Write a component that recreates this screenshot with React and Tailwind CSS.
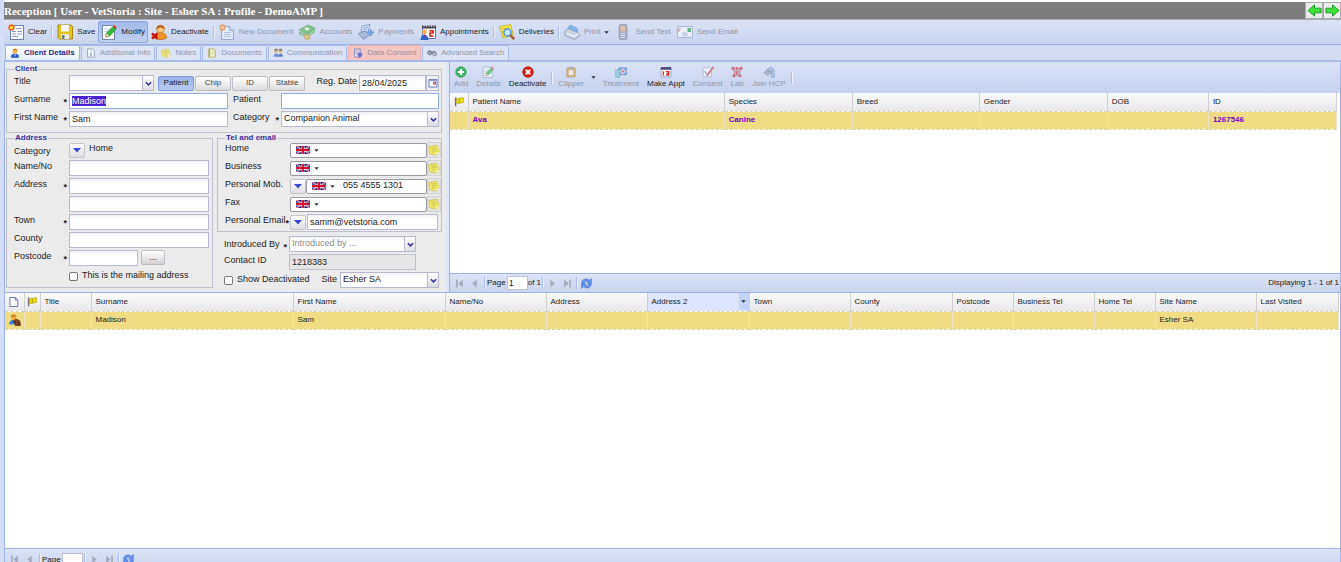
import React, { useEffect, useRef } from "react";

const icons = {
  clear: (
    <>
      <rect x="2.5" y="1.5" width="13" height="14" fill="#fdfdff" stroke="#6d84b4" />
      <path d="M8 4.500h6M4 7.500h4M9.500 7.500h4.500M4 10h4M9.500 10h4.500M4 12.500h6" stroke="#8f9bc0" />
      <circle cx="3.500" cy="3.500" r="3.200" fill="#ef6a1c" />
      <circle cx="3.500" cy="3.500" r="1.500" fill="#ffe04a" />
    </>
  ),
  save: (
    <>
      <path d="M1 1h13l1.500 1.500V15H2.500L1 13.500z" fill="#e3c51d" stroke="#a58a0e" />
      <path d="M4 1h8v6.500H4z" fill="#f4f6fb" />
      <path d="M4 10h8v5H4z" fill="#e9edf6" />
      <path d="M5 11h2.500v4H5z" fill="#6f7686" />
    </>
  ),
  modify: (
    <>
      <path d="M1.500 1.500h12v14h-12z" fill="#fff" stroke="#7687a8" />
      <path d="M3.500 7.500h4M3.500 10h3M3.500 5h5" stroke="#b9c4d8" />
      <path d="M4.500 13l1.200-4L12 2.500 15 5l-6.500 7z" fill="#35b93c" stroke="#1c7a2b" strokeWidth=".7" />
      <path d="M11.800 2.700L13.300 1l2.400 2.200L14.600 5z" fill="#e2363c" />
      <path d="M4.500 13l1.200-3.500 2.500 2.300z" fill="#f3cf9a" />
    </>
  ),
  userDelete: (
    <>
      <path d="M3 14c0-4 2.500-5.500 6-5.500s6.500 1.500 6.500 5.500c-3 2-9 2-12.500 0z" fill="#f0982a" stroke="#b9601a" strokeWidth=".7" />
      <circle cx="9.500" cy="5" r="3.800" fill="#f8ca84" stroke="#b36d1c" strokeWidth=".6" />
      <path d="M5.400 5.200C5 0 14 0 13.700 5.200 11.500 4.500 10.500 3.500 9.500 3.500S6.800 4.500 5.400 5.200z" fill="#b8621a" />
      <path d="M1 9.500l5.500 5M6.500 9.500l-5.500 5" stroke="#c9140c" strokeWidth="2.400" />
    </>
  ),
  newDoc: (
    <>
      <path d="M2.500 2.500h8l4 4v9h-12z" fill="#eef4ff" stroke="#6f8fc6" />
      <path d="M10.500 2.500v4h4" fill="#c9dbf8" stroke="#6f8fc6" />
      <path d="M5 8.500h7M5 10.500h7M5 12.500h7" stroke="#9fb6de" />
      <circle cx="3.500" cy="3.500" r="3.200" fill="#f08035" />
      <circle cx="3.500" cy="3.500" r="1.300" fill="#ffe56b" />
    </>
  ),
  accounts: (
    <>
      <path d="M0 6l9-5 7 3-8 6z" fill="#45b445" stroke="#2e8636" strokeWidth=".7" />
      <path d="M0 8l8 2.500L16 5v3l-8 5-8-3z" fill="#7fd56c" stroke="#2e8636" strokeWidth=".7" />
      <ellipse cx="8" cy="5" rx="2.500" ry="1.400" fill="#e5f6d8" />
      <path d="M5 11h5l1 4H6z" fill="#efc03c" stroke="#b48316" strokeWidth=".7" />
    </>
  ),
  payments: (
    <>
      <path d="M4 2l8-1.500-2 8-7-1z" fill="#e3ecfa" stroke="#466aa2" strokeWidth=".9" />
      <path d="M5.500 4l4.500-1M5 6l4.500-1" stroke="#5f81b5" />
      <path d="M.5 9.500l7-2.500 5 3.500-7 5z" fill="#8499c0" stroke="#3c5a94" strokeWidth=".7" />
      <path d="M3 10l3 2.500M5.500 9l3 2.500" stroke="#dde5f4" strokeWidth=".8" />
      <path d="M9.500 8.500h6.500M12.700 5.500v6.500" stroke="#2f74e0" strokeWidth="2.200" />
    </>
  ),
  calendar: (
    <>
      <path d="M2.500 3.500h13v11h-13z" fill="#fff" stroke="#6b6fd5" />
      <path d="M2 1.500h14v3H2z" fill="#44454f" />
      <path d="M4 0v3M6.500 0v3M9 0v3M11.500 0v3M14 0v3" stroke="#e0e2ee" strokeWidth=".8" />
      <path d="M9.500 6.800h3.500v2.200h-3v3h3.500" fill="none" stroke="#e02b20" strokeWidth="1.700" />
      <circle cx="4.500" cy="8" r="2.400" fill="#f0b54a" />
      <path d="M.5 16c0-7 8-7 8 0z" fill="#2d65cc" />
      <path d="M4 10.500l.500 3 .500-3z" fill="#e02b20" />
    </>
  ),
  deliveries: (
    <>
      <path d="M.7 2.500l11-2 2.500 10L4 14z" fill="#f6e94c" stroke="#bba81b" strokeWidth=".8" />
      <path d="M3 5l7-1.500M3.500 7.500l3-.500" stroke="#c8b52a" strokeWidth=".8" />
      <circle cx="8.500" cy="8.500" r="3.600" fill="#c7e6fc" stroke="#4f95d8" strokeWidth="1.500" />
      <path d="M11.200 11.200l4 4" stroke="#a85a20" strokeWidth="2.400" />
    </>
  ),
  print: (
    <>
      <path d="M3 6l3-5 7 3 1 5z" fill="#3f9cec" stroke="#3b7dbb" strokeWidth=".7" />
      <path d="M.5 8l3-3.500 10.500 4 2 3-5.500 4L1 11.500z" fill="#c7cedb" stroke="#6b7484" strokeWidth=".8" />
      <path d="M2 9.500l8.500 3 4-3" fill="none" stroke="#fff" strokeWidth="1.300" />
    </>
  ),
  phone: (
    <>
      <path d="M5 .500h6l1 1v13l-1 1H5l-1-1v-13z" fill="#858ca2" stroke="#636b80" strokeWidth=".7" />
      <path d="M5.500 2h5v5.500h-5z" fill="#f5a66c" />
      <path d="M5.500 9.500h5M5.500 11.500h5M5.500 13.500h5" stroke="#dfe3ec" />
    </>
  ),
  email: (
    <>
      <path d="M.5 2.500h15v11H.5z" fill="#f8f9fe" stroke="#8695c4" strokeWidth=".9" />
      <path d="M10.500 4h3.500v4h-3.500z" fill="#12a43a" />
      <path d="M5 9h5M5 11h6" stroke="#97a3c8" />
      <path d="M.5 5h3.500M.5 7h2.500" stroke="#e25c6c" />
    </>
  ),
  user: (
    <>
      <path d="M2 14.500c0-7 12-7 12 0-3 1.500-9 1.500-12 0z" fill="#3667cf" stroke="#234793" />
      <circle cx="8" cy="5" r="3.800" fill="#f2b04e" />
      <path d="M4 4c0-4 8-4 8 0-3-1-5-1-8 0z" fill="#c07a25" />
      <path d="M7 9h2l-1 5z" fill="#fff" />
    </>
  ),
  info: (
    <>
      <path d="M2.500 1.500h8l3 3v10h-11z" fill="#fff" stroke="#7c8cab" strokeWidth="1.500" />
      <path d="M8 5v1.500M8 8v4.500" stroke="#536a9c" strokeWidth="2" />
    </>
  ),
  note: (
    <>
      <path d="M1 3.500l11-2 3 9-4 4.500-9-2z" fill="#f1e944" stroke="#c9be35" />
      <path d="M4 5.500l6-1M4.500 8l7-1M5 11l5-1" stroke="#bdb232" />
      <path d="M15 10.500l-4 .500v4z" fill="#fbf8b5" />
    </>
  ),
  docs: (
    <>
      <path d="M2.500 1.500h8l3 3v10h-11z" fill="#fbf9b0" stroke="#a8a647" strokeWidth="1.500" />
      <path d="M4 2v12" stroke="#72a34b" strokeWidth="2" />
      <path d="M7 6h5M7 9h5" stroke="#bcb974" />
    </>
  ),
  users: (
    <>
      <circle cx="5" cy="5" r="3" fill="#e6a94c" />
      <circle cx="12" cy="5" r="2.800" fill="#e6a94c" />
      <path d="M1 14c0-7 8-7 8 0z" fill="#3c70d8" />
      <path d="M8 14c0-7 8-7 8 0z" fill="#3c5fa8" />
      <path d="M2 4c0-4 6-4 6 0zM9 4c0-4 6-4 6 0z" fill="#5a3a13" />
    </>
  ),
  consent: (
    <>
      <path d="M2.500 1.500h9v13h-9z" fill="#dfe6fb" stroke="#6276ba" strokeWidth="1.500" />
      <path d="M4 5h6M4 8h4" stroke="#6276ba" />
      <path d="M7 8.500l4-1.500 4 1.500c0 4-1.500 6-4 7-2.500-1-4-3-4-7z" fill="#3d52c8" />
    </>
  ),
  binoculars: (
    <>
      <path d="M0 6l4-3 5 2 3-1 4 5-2 4-4-1-1-3-3 2-4-1z" fill="#6b7387" />
      <circle cx="4" cy="8" r="2.800" fill="#8d96ab" stroke="#353c50" />
      <circle cx="12" cy="10" r="2.800" fill="#c5cddd" stroke="#353c50" />
    </>
  ),
  add: (
    <>
      <circle cx="8" cy="8" r="7" fill="#3fbb66" stroke="#2f9a50" />
      <path d="M8 4v8M4 8h8" stroke="#fff" strokeWidth="2.600" />
    </>
  ),
  remove: (
    <>
      <circle cx="8" cy="8" r="7" fill="#e01a10" stroke="#a60f08" />
      <path d="M5 5l6 6M11 5l-6 6" stroke="#fff" strokeWidth="2.600" />
    </>
  ),
  clipper: (
    <>
      <path d="M2.500 2.500h11v12h-11z" fill="#d9992e" stroke="#a87a28" />
      <path d="M5 5.500h6v6.500H5z" fill="#f7f4ec" />
      <path d="M5.500 1h5v3h-5z" fill="#8a90a0" />
    </>
  ),
  treatment: (
    <>
      <path d="M5 2.500h10.500v9H5z" fill="#3f84ea" stroke="#2e62b4" />
      <path d="M1 5h5v10H1z" fill="#7fc8d4" stroke="#4a97a5" />
      <path d="M10.700 3.500v7M7.200 7h7" stroke="#fff" strokeWidth="3" />
      <path d="M10.700 4.500v5M8.200 7h5" stroke="#e0291f" strokeWidth="1.500" />
    </>
  ),
  appt: (
    <>
      <path d="M1.500 2.500h13v12h-13z" fill="#fff" stroke="#8a8fc4" />
      <path d="M1 1.500h14v3.500H1z" fill="#4a4a75" />
      <path d="M4.500 7v5.500M8 7.500h3.500v2.300H9M8 12h3.500V9.700" fill="none" stroke="#e02b20" strokeWidth="1.800" />
    </>
  ),
  sign: (
    <>
      <path d="M1.500 2.500h11v12h-11z" fill="#fff" stroke="#8797bd" />
      <path d="M3.500 7l3 4" stroke="#5a73b8" strokeWidth="1.500" />
      <path d="M15.500 1L6.500 13" stroke="#c6352d" strokeWidth="2.200" />
    </>
  ),
  lab: (
    <>
      <path d="M3 3h10l-2 9H5zM3 3l5 6 5-6M8 3v11" fill="none" stroke="#b0434a" strokeWidth="1.300" />
      <circle cx="2.500" cy="3" r="2" fill="#cf2d2d" />
      <circle cx="8" cy="3" r="2" fill="#cf2d2d" />
      <circle cx="13.500" cy="3" r="2" fill="#cf2d2d" />
      <circle cx="8" cy="8.500" r="2" fill="#cf2d2d" />
      <circle cx="4" cy="13" r="2" fill="#cf2d2d" />
      <circle cx="12" cy="13" r="2" fill="#cf2d2d" />
    </>
  ),
  join: (
    <>
      <path d="M6 5l4-4 5 4v10h-4V9z" fill="#8dabe4" stroke="#5d7cb8" />
      <path d="M1 9l6-5v3h4v3H7v3z" fill="#9ba4b8" stroke="#5d6679" strokeWidth=".8" />
    </>
  ),
  flag: (
    <>
      <path d="M2.500 1v14" stroke="#6c717b" strokeWidth="2.200" />
      <path d="M4 2c4 2 5-1 11-1v8c-5 0-7 2-11 1z" fill="#efdd0b" stroke="#a89b0c" />
      <path d="M8.500 2.500v7" stroke="#a39608" strokeWidth="1.500" />
    </>
  ),
  page: <path d="M1.500 .800h8.500l4 4v10.400H1.500zM10 .800v4h4" fill="#fff" stroke="#5668a0" strokeWidth="1.400" />,
  clientPet: (
    <>
      <path d="M0 14c0-8 10-8 10 0z" fill="#3a7fd8" />
      <circle cx="6" cy="4.500" r="3.500" fill="#f0ab45" />
      <path d="M2.500 4c0-5 7-5 7.500 0z" fill="#d0881c" />
      <path d="M6 9l3-3 6 3 1 7H8z" fill="#7a4520" />
      <path d="M6 9l3 3M13 11v3" stroke="#3f2008" strokeWidth="1.500" />
    </>
  ),
  date: (
    <>
      <path d="M1.500 2.500h13v12h-13z" fill="#f7f9ff" stroke="#6575a8" strokeWidth="1.500" />
      <path d="M2 4h12" stroke="#8ea0d0" strokeWidth="2" />
      <path d="M9 6.500h3v3.500H9z" fill="none" stroke="#c23030" strokeWidth="1.500" />
    </>
  ),
  refresh: (
    <>
      <path d="M1 7.500C1 1 9 0 12 3.500L15 1v6.500H8.500L10.500 5.500C8 3.500 5.500 4.500 4.500 7.500z" fill="#6b9bf5" stroke="#2f5fc4" strokeWidth=".8" />
      <path d="M15 8.500C15 15 7 16 4 12.500L1 15V8.500h6.500L5.500 10.500C8 12.500 10.500 11.500 11.500 8.500z" fill="#6b9bf5" stroke="#2f5fc4" strokeWidth=".8" />
    </>
  ),
  first: <path d="M2 1h3v14H2zM14 1v14L6 8z" fill="#a6adba" />,
  prev: <path d="M12 1v14L4 8z" fill="#a6adba" />,
  next: <path d="M4 1v14l8-7z" fill="#a6adba" />,
  last: <path d="M2 1v14l8-7zM11 1h3v14h-3z" fill="#a6adba" />,
  left: <path d="M1 8l7-6v3.500h7v5H8V14z" fill="#3de03a" stroke="#189a22" />,
  right: <path d="M15 8L8 2v3.500H1v5h7V14z" fill="#3de03a" stroke="#189a22" />,
  chevron: <path d="M2 5l6 6 6-6" fill="none" stroke="#33339a" strokeWidth="3.500" />,
  caret: <path d="M1 4h14l-7 8z" fill="#333" />,
  blueCaret: <path d="M0 4h16l-8 9z" fill="#3a46d8" />,
};

const Icon = ({ name, className = "size-4" }) => (
  <svg viewBox="0 0 16 16" fill="none" aria-hidden="true" className={`shrink-0 ${className}`}>
    {icons[name]}
  </svg>
);

const UkFlag = () => (
  <svg viewBox="0 0 28 16" aria-hidden="true" className="h-2 w-[14px] shrink-0">
    <rect width="28" height="16" fill="#1d2a83" />
    <path d="M0 0l28 16M28 0L0 16" stroke="#fff" strokeWidth="2.500" />
    <path d="M0 0l28 16M28 0L0 16" stroke="#d3122e" strokeWidth="1.300" />
    <path d="M14 0v16M0 8h28" stroke="#fff" strokeWidth="5.500" />
    <path d="M14 0v16M0 8h28" stroke="#d3122e" strokeWidth="3.800" />
  </svg>
);

const Separator = () => <span className="mx-px h-3 w-[2px] shrink-0 border-l border-[#a9bdf0] bg-[#eef2fc]" />;

const ToolButton = ({ icon, label, disabled, pressed, menu }) => (
  <button
    disabled={disabled}
    className={`flex h-[22px] items-center gap-1 rounded-xs border px-[2px] whitespace-nowrap ${
      pressed ? "border-[#8ea6dc] bg-linear-to-b from-[#a4b9e9] to-[#c2d1f3]" : "border-transparent"
    } ${disabled ? "text-[#9096a8]" : "text-[#222]"}`}
  >
    <Icon name={icon} className={disabled ? "size-4 opacity-60" : "size-4"} />
    {label}
    {menu && <Icon name="caret" className="size-[5px]" />}
  </button>
);

const Tab = ({ icon, label, active, alert }) => (
  <button
    disabled={!active}
    className={`flex h-[15px] items-center gap-1 rounded-t-xs border border-b-0 px-1 whitespace-nowrap ${
      active
        ? "border-[#9db2e8] bg-linear-to-b from-white to-[#e6edfb] font-bold text-[#2b2b85]"
        : alert
          ? "border-[#f2b3ad] bg-[#f3c5c3] text-[#a48f9b]"
          : "border-[#a9bbea] bg-[#dbe3f5] text-[#9499ab]"
    }`}
  >
    <Icon name={icon} className={active ? "size-[10px]" : "size-[10px] opacity-70"} />
    {label}
  </button>
);

const Label = ({ htmlFor, children, required, className = "w-[55px]" }) => (
  <label htmlFor={htmlFor} className={`flex shrink-0 self-start pr-[2px] leading-3 whitespace-nowrap ${className}`}>
    {children}
    {required && <span className="ml-auto pt-[3px] font-bold">*</span>}
  </label>
);

const inputStyle =
  "h-4 min-w-0 rounded-none border border-[#b9b9d0] bg-linear-to-b from-[#f1f1f1] to-white to-30% px-[2px] outline-none";

const Combo = ({ id, value, muted, options = [], className = "" }) => (
  <div className={`relative flex h-4 ${className}`}>
    <select
      id={id}
      defaultValue={value}
      className={`${inputStyle} w-full appearance-none ${muted ? "text-[#8a8a8a]" : ""}`}
    >
      <option>{value}</option>
      {options.map((o) => (
        <option key={o}>{o}</option>
      ))}
    </select>
    <span className="pointer-events-none absolute inset-y-0 right-0 flex w-3 items-center justify-center border border-[#b9b9d0] bg-linear-to-b from-white to-[#dcdce4]">
      <Icon name="chevron" className="size-[7px]" />
    </span>
  </div>
);

const DropButton = ({ label }) => (
  <button
    type="button"
    aria-label={label}
    className="flex h-[15px] w-4 shrink-0 items-center justify-center rounded-xs border border-[#c3c3cc] bg-linear-to-b from-white to-[#dedee2]"
  >
    <Icon name="blueCaret" className="size-2" />
  </button>
);

const SmallToggle = ({ label, pressed }) => (
  <button
    type="button"
    aria-pressed={!!pressed}
    className={`h-[15px] w-9 rounded-xs border text-[8px] ${
      pressed
        ? "border-[#7d9ad8] bg-linear-to-b from-[#9db4e8] to-[#b9caf1] text-[#222]"
        : "border-[#bcbcc2] bg-linear-to-b from-white to-[#dcdcde] text-[#444]"
    }`}
  >
    {label}
  </button>
);

const PhoneRow = ({ id, label, value = "", drop }) => (
  <div className="flex h-4 items-center">
    <Label htmlFor={id} className="w-[65px]">
      {label}
    </Label>
    {drop && <DropButton label={`${label} category`} />}
    <div className="flex h-[15px] min-w-0 flex-1 items-center gap-1 rounded-xs border border-[#9a9aa2] bg-white pl-[5px]">
      <UkFlag />
      <Icon name="caret" className="size-[5px]" />
      <input id={id} defaultValue={value} className="ml-1 min-w-0 flex-1 outline-none" />
    </div>
    <button
      type="button"
      aria-label={`${label} note`}
      className="flex h-4 w-[14px] items-center justify-center border border-[#d2d2d2] bg-[#e4e4e4]"
    >
      <Icon name="note" className="size-3 opacity-80" />
    </button>
  </div>
);

const Fieldset = ({ legend, className = "", children }) => (
  <fieldset className={`min-w-0 border border-[#c0c0d0] pl-[7px] ${className}`}>
    <legend className="px-px text-[8px] leading-2 font-bold text-[#3a2f9c]">{legend}</legend>
    <div className="flex flex-col gap-[2px]">{children}</div>
  </fieldset>
);

const ClientForm = () => {
  const surnameRef = useRef(null);

  useEffect(() => {
    surnameRef.current.focus();
    surnameRef.current.select();
  }, []);

  return (
    <form
      onSubmit={(e) => e.preventDefault()}
      className="w-[441px] shrink-0 bg-[#ebebeb] px-px pt-[3px] pb-1 text-[9px] text-[#222]"
    >
      <Fieldset legend="Client" className="mr-[3px] pr-[2px] pb-[5px]">
        <div className="mt-[2px] flex h-4 items-center">
          <Label htmlFor="title">Title</Label>
          <Combo id="title" value="" options={["Mr", "Mrs", "Miss", "Dr"]} className="w-[85px]" />
          <div className="ml-1 flex gap-px">
            <SmallToggle label="Patient" pressed />
            <SmallToggle label="Chip" />
            <SmallToggle label="ID" />
            <SmallToggle label="Stable" />
          </div>
          <Label htmlFor="regDate" className="ml-auto">
            Reg. Date
          </Label>
          <input id="regDate" defaultValue="28/04/2025" className={`${inputStyle} w-[67px]`} />
          <button
            type="button"
            aria-label="Pick date"
            className="flex h-4 w-[13px] items-center justify-center border border-[#b9b9d0] bg-[#eee]"
          >
            <Icon name="date" className="size-[10px]" />
          </button>
        </div>
        <div className="flex h-4 items-center">
          <Label htmlFor="surname" required>
            Surname
          </Label>
          <input
            id="surname"
            ref={surnameRef}
            defaultValue="Madison"
            className="h-4 w-[159px] border border-[#8fb0e0] bg-white px-[2px] outline-none selection:bg-[#4a22d4] selection:text-white"
          />
          <Label htmlFor="patient" className="ml-[5px] w-[48px]">
            Patient
          </Label>
          <input id="patient" className="h-4 min-w-0 flex-1 border border-[#8fb0e0] bg-white px-[2px] outline-none" />
        </div>
        <div className="flex h-4 items-center">
          <Label htmlFor="firstName" required>
            First Name
          </Label>
          <input id="firstName" defaultValue="Sam" className={`${inputStyle} w-[159px]`} />
          <Label htmlFor="category" required className="ml-[5px] w-[48px]">
            Category
          </Label>
          <Combo id="category" value="Companion Animal" options={["Equine", "Farm"]} className="flex-1" />
        </div>
      </Fieldset>

      <div className="mt-px flex gap-1">
        <Fieldset legend="Address" className="w-[207px] shrink-0 pr-[3px]">
          <div className="flex h-4 items-center">
            <Label className="w-[55px] pt-[3px]">Category</Label>
            <DropButton label="Address category" />
            <span className="ml-1 self-start leading-3">Home</span>
          </div>
          <div className="flex h-4">
            <Label htmlFor="nameNo">Name/No</Label>
            <input id="nameNo" className={`${inputStyle} flex-1`} />
          </div>
          <div className="flex h-4">
            <Label htmlFor="address1" required>
              Address
            </Label>
            <input id="address1" className={`${inputStyle} flex-1`} />
          </div>
          <input aria-label="Address 2" className={`${inputStyle} ml-[55px]`} />
          <div className="flex h-4">
            <Label htmlFor="town" required>
              Town
            </Label>
            <input id="town" className={`${inputStyle} flex-1`} />
          </div>
          <div className="flex h-4">
            <Label htmlFor="county">County</Label>
            <input id="county" className={`${inputStyle} flex-1`} />
          </div>
          <div className="flex h-4">
            <Label htmlFor="postcode" required>
              Postcode
            </Label>
            <input id="postcode" className={`${inputStyle} w-[69px]`} />
            <button
              type="button"
              className="ml-[3px] h-[15px] w-6 rounded-xs border border-[#bcbcc2] bg-linear-to-b from-white to-[#d4d4d6] leading-none"
            >
              ...
            </button>
          </div>
          <label className="ml-[55px] flex h-4 items-center gap-1 whitespace-nowrap">
            <input
              type="checkbox"
              className="size-[9px] appearance-none rounded-xs border border-[#777] bg-white checked:bg-[#3a46d8]"
            />
            This is the mailing address
          </label>
        </Fieldset>

        <div className="flex min-w-0 flex-1 flex-col gap-[2px]">
          <Fieldset legend="Tel and email" className="mr-[3px] pb-px">
            <PhoneRow id="telHome" label="Home" />
            <PhoneRow id="telBusiness" label="Business" />
            <PhoneRow id="telMobile" label="Personal Mob." value="055 4555 1301" drop />
            <PhoneRow id="fax" label="Fax" />
            <div className="flex h-4 items-center pr-[3px]">
              <Label htmlFor="email" required className="w-[65px]">
                Personal Email
              </Label>
              <DropButton label="Email category" />
              <input id="email" type="email" defaultValue="samm@vetstoria.com" className={`${inputStyle} ml-px flex-1`} />
            </div>
          </Fieldset>
          <div className="mt-[2px] flex h-4 pl-[7px]">
            <Label htmlFor="introducedBy" required className="w-[65px] pt-[2px]">
              Introduced By
            </Label>
            <Combo id="introducedBy" value="Introduced by ..." muted className="w-[127px]" />
          </div>
          <div className="flex h-4 pl-[7px]">
            <Label htmlFor="contactId" className="w-[65px]">
              Contact ID
            </Label>
            <input
              id="contactId"
              readOnly
              defaultValue="1218383"
              className="h-4 w-[127px] border border-[#c0c0cc] bg-[#e6e6e6] px-[2px] outline-none"
            />
          </div>
          <div className="flex h-4 items-center pr-[6px] pl-[7px]">
            <label className="flex items-center gap-1 whitespace-nowrap">
              <input
                type="checkbox"
                className="size-[9px] appearance-none rounded-xs border border-[#777] bg-white checked:bg-[#3a46d8]"
              />
              Show Deactivated
            </label>
            <label htmlFor="site" className="mr-[3px] ml-auto">
              Site
            </label>
            <Combo id="site" value="Esher SA" className="w-[99px]" />
          </div>
        </div>
      </div>
    </form>
  );
};

const PatientButton = ({ icon, label, disabled }) => (
  <button
    disabled={disabled}
    className={`flex flex-col items-center gap-px px-1 leading-[10px] whitespace-nowrap ${
      disabled ? "text-[#9096a8]" : "text-[#222]"
    }`}
  >
    <Icon name={icon} className={disabled && icon !== "add" ? "size-3 opacity-60" : "size-3"} />
    {label}
  </button>
);

const Pager = ({ page, total, status, className = "" }) => (
  <div
    className={`flex shrink-0 items-center border-t border-[#9db2e8] bg-linear-to-b from-[#dbe3f4] to-[#c9d4ee] px-[3px] text-[8px] text-[#222] ${className}`}
  >
    <button aria-label="First page" className="px-[2px]">
      <Icon name="first" className="size-[9px]" />
    </button>
    <button aria-label="Previous page" className="px-1">
      <Icon name="prev" className="size-[9px]" />
    </button>
    <Separator />
    <label className="flex items-center whitespace-nowrap">
      Page
      <input
        defaultValue={page}
        className="ml-px h-[14px] w-[21px] border border-[#c0c0d0] bg-white px-px text-[9px] outline-none"
      />
    </label>
    {total}
    <Separator />
    <button aria-label="Next page" className="px-[3px]">
      <Icon name="next" className="size-[9px]" />
    </button>
    <button aria-label="Last page" className="px-[3px]">
      <Icon name="last" className="size-[9px]" />
    </button>
    <Separator />
    <button aria-label="Refresh" className="px-[2px]">
      <Icon name="refresh" className="size-[11px]" />
    </button>
    <span className="-mr-[2px] ml-auto">{status}</span>
  </div>
);

const patientColumns = [
  { icon: "flag", width: "w-[18px]" },
  { name: "Patient Name", width: "w-[256px]", value: "Ava" },
  { name: "Species", width: "w-[128px]", value: "Canine" },
  { name: "Breed", width: "w-[127px]" },
  { name: "Gender", width: "w-[128px]" },
  { name: "DOB", width: "w-[101px]" },
  { name: "ID", width: "w-[128px]", value: "1267546" },
];

const clientColumns = [
  { icon: "page", width: "w-[19px]", cellIcon: "clientPet" },
  { icon: "flag", width: "w-[16px]" },
  { name: "Title", width: "w-[51px]" },
  { name: "Surname", width: "w-[202px]", value: "Madison" },
  { name: "First Name", width: "w-[152px]", value: "Sam" },
  { name: "Name/No", width: "w-[101px]" },
  { name: "Address", width: "w-[101px]" },
  { name: "Address 2", width: "w-[102px]", sorted: true },
  { name: "Town", width: "w-[101px]" },
  { name: "County", width: "w-[102px]" },
  { name: "Postcode", width: "w-[61px]" },
  { name: "Business Tel", width: "w-[81px]" },
  { name: "Home Tel", width: "w-[61px]" },
  { name: "Site Name", width: "w-[101px]", value: "Esher SA" },
  { name: "Last Visited", width: "w-[82px]" },
];

const Grid = ({ columns, rowClass }) => (
  <table className="w-full table-fixed border-collapse text-left text-[8px] text-[#222]">
    <colgroup>
      {columns.map((c, i) => (
        <col key={i} className={c.width} />
      ))}
    </colgroup>
    <thead>
      <tr className="h-[18px] bg-linear-to-b from-[#fafafa] to-[#e9e9ec]">
        {columns.map((c, i) => (
          <th
            key={i}
            className={`overflow-hidden border-r border-[#d0d0d0] p-0 font-normal whitespace-nowrap ${
              c.sorted ? "bg-[#dce5fc]" : ""
            }`}
          >
            {c.icon ? (
              <Icon name={c.icon} className="mx-auto size-[10px]" />
            ) : (
              <div className="flex h-[17px] items-center justify-between pl-1">
                {c.name}
                {c.sorted && (
                  <span className="flex h-full w-[10px] items-center justify-center bg-[#c3d3fa]">
                    <Icon name="caret" className="size-[5px]" />
                  </span>
                )}
              </div>
            )}
          </th>
        ))}
      </tr>
    </thead>
    <tbody>
      <tr className={`h-[18px] border-y border-dashed border-[#d9d2b4] bg-[#efdc85] ${rowClass}`}>
        {columns.map((c, i) => (
          <td key={i} className="overflow-hidden border-r border-r-[#eae3c8] p-0 pl-1 whitespace-nowrap">
            {c.cellIcon ? <Icon name={c.cellIcon} className="size-3" /> : c.value}
          </td>
        ))}
      </tr>
    </tbody>
  </table>
);

const App = () => {
  return (
    <div className="h-screen overflow-hidden bg-white font-['Liberation_Sans',sans-serif]">
      <div className="flex h-[calc(100%+8px)] flex-col border-l-4 border-[#d3ddf8] pt-[2px]">
        <header className="flex h-[18px] shrink-0 items-center border-b border-[#a8a8b8] bg-[#7d7d7d]">
          <h1 className="flex-1 truncate font-['Liberation_Serif',serif] text-[11px] leading-4 font-bold text-white">
            Reception [ User - VetStoria : Site - Esher SA : Profile - DemoAMP ]
          </h1>
          <button aria-label="Back" className="flex h-full w-[18px] items-center justify-center border border-[#aaa] bg-[#ececec]">
            <Icon name="left" className="size-[15px]" />
          </button>
          <button aria-label="Forward" className="flex h-full w-[18px] items-center justify-center border border-[#aaa] bg-[#ececec]">
            <Icon name="right" className="size-[15px]" />
          </button>
        </header>

        <div className="flex h-[25px] shrink-0 items-center border-b border-[#9db2e8] bg-linear-to-b from-[#dbe3f4] to-[#c9d4ee] px-px text-[8px]">
          <ToolButton icon="clear" label="Clear" />
          <Separator />
          <ToolButton icon="save" label="Save" />
          <ToolButton icon="modify" label="Modify" pressed />
          <ToolButton icon="userDelete" label="Deactivate" />
          <Separator />
          <ToolButton icon="newDoc" label="New Document" disabled />
          <ToolButton icon="accounts" label="Accounts" disabled />
          <ToolButton icon="payments" label="Payments" disabled />
          <ToolButton icon="calendar" label="Appointments" />
          <Separator />
          <ToolButton icon="deliveries" label="Deliveries" />
          <Separator />
          <ToolButton icon="print" label="Print" disabled menu />
          <ToolButton icon="phone" label="Send Text" disabled />
          <ToolButton icon="email" label="Send Email" disabled />
        </div>

        <nav className="flex h-[17px] shrink-0 items-end gap-px border-b-2 border-[#a9bbea] bg-[#d3dcf1] px-px text-[8px]">
          <Tab icon="user" label="Client Details" active />
          <Tab icon="info" label="Additional Info" />
          <Tab icon="note" label="Notes" />
          <Tab icon="docs" label="Documents" />
          <Tab icon="users" label="Communication" />
          <Tab icon="consent" label="Data Consent" alert />
          <Tab icon="binoculars" label="Advanced Search" />
        </nav>

        <main className="flex min-h-0 flex-1 flex-col border-x border-[#9db2e8]">
          <div className="flex shrink-0 bg-[#dfe6f8]">
            <ClientForm />
            <section className="ml-[3px] flex min-w-0 flex-1 flex-col border-l border-[#9db2e8] bg-white">
              <div className="flex h-[31px] shrink-0 items-center bg-linear-to-b from-[#dbe3f4] to-[#c5d1ee] text-[8px]">
                <PatientButton icon="add" label="Add" disabled />
                <PatientButton icon="modify" label="Details" disabled />
                <PatientButton icon="remove" label="Deactivate" />
                <Separator />
                <PatientButton icon="clipper" label="Clipper" disabled />
                <Icon name="caret" className="mx-[3px] size-[5px]" />
                <PatientButton icon="treatment" label="Treatment" disabled />
                <PatientButton icon="appt" label="Make Appt" />
                <PatientButton icon="sign" label="Consent" disabled />
                <PatientButton icon="lab" label="Lab" disabled />
                <PatientButton icon="join" label="Join HCP" disabled />
                <Separator />
              </div>
              <div className="flex-1 pr-[3px]">
                <Grid columns={patientColumns} rowClass="font-bold text-[#7a00c4]" />
              </div>
              <Pager page="1" total="of 1" status="Displaying 1 - 1 of 1" className="h-[19px]" />
            </section>
          </div>
          <section className="flex min-h-0 flex-1 flex-col border-t border-[#9db2e8] bg-white">
            <div className="flex-1 pr-[2px]">
              <Grid columns={clientColumns} rowClass="" />
            </div>
            <Pager page="" className="h-[22px]" />
          </section>
        </main>
      </div>
    </div>
  );
};

export default App;
